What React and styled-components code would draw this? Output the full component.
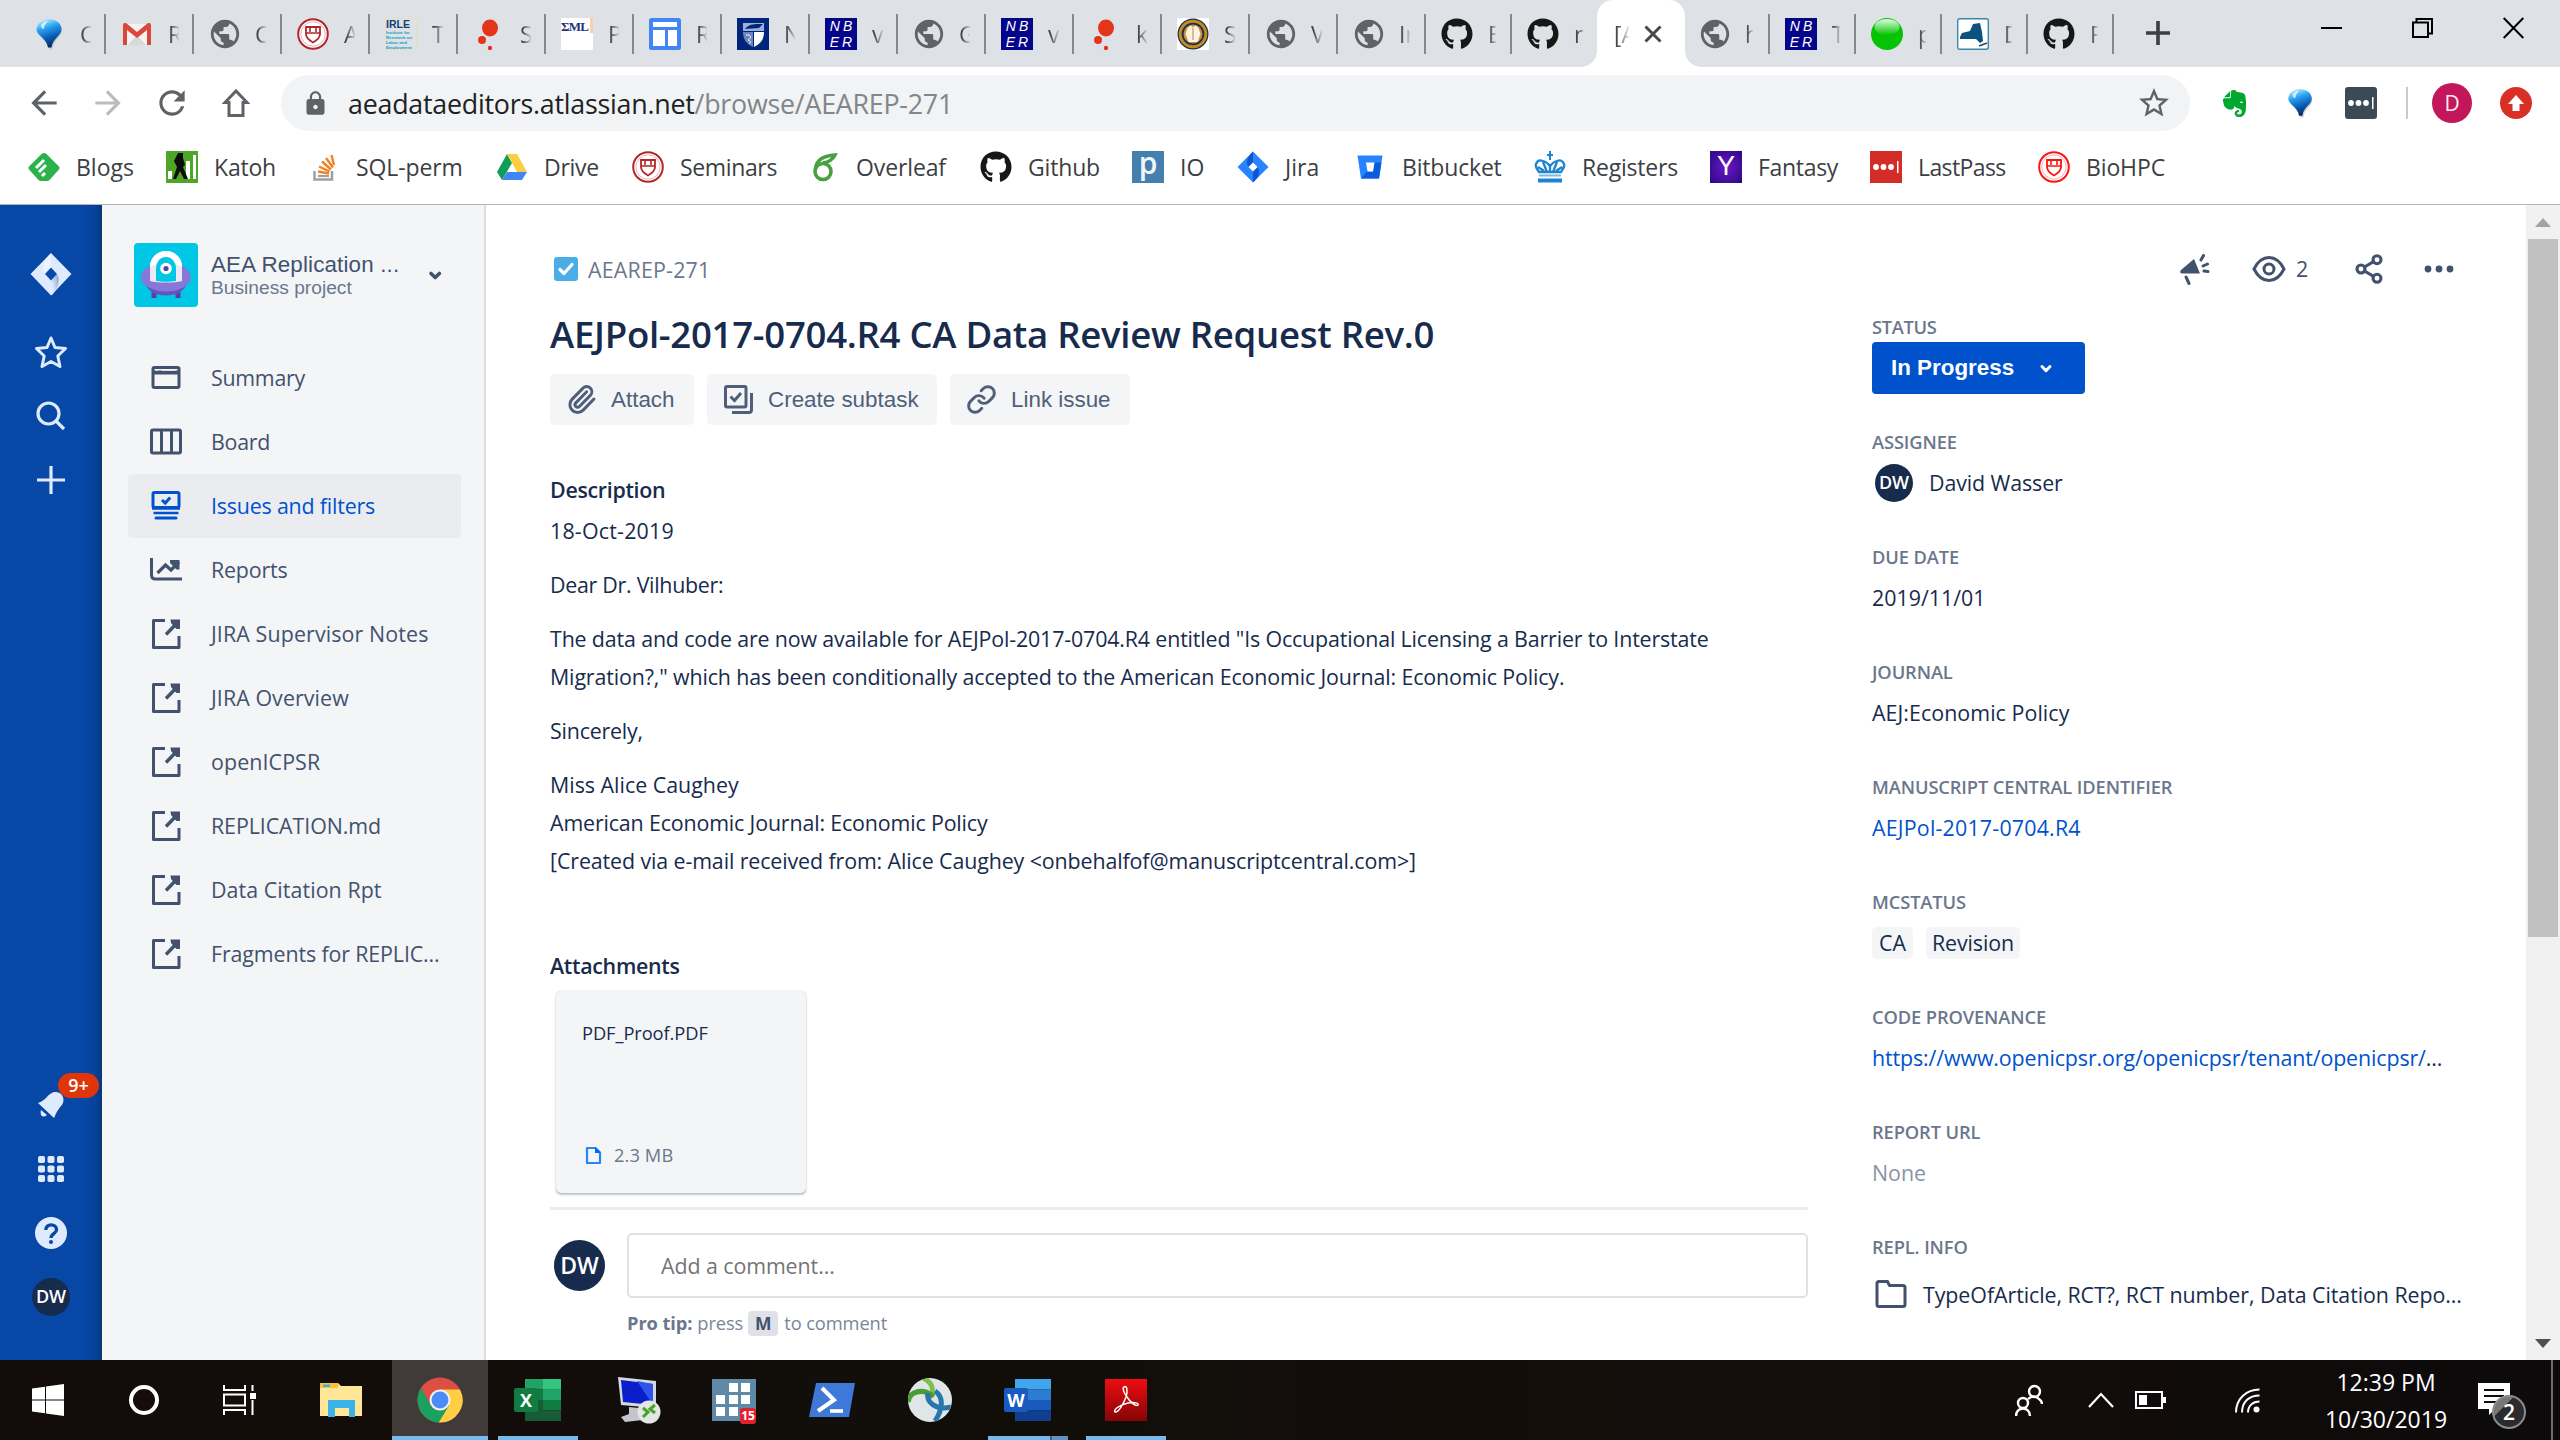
import React from "react";
import styled, { createGlobalStyle, css } from "styled-components";
import { MdPublic, MdArrowBack, MdArrowForward, MdRefresh, MdLock, MdStarBorder } from "react-icons/md";
import { FaGithub, FaEvernote } from "react-icons/fa";
import { Paperclip, Link, Share2 } from "lucide-react";

const ui = `"Open Sans", "Noto Sans", sans-serif`;
const arial = `"Liberation Sans", Arial, sans-serif`;
const navy = "#172b4d";
const slate = "#42526e";

const GlobalStyle = createGlobalStyle`
  * { box-sizing: border-box; }
  body { margin: 0; background: #fff; font-family: ${ui}; overflow: hidden; }
  svg { display: block; flex: none; }
`;

const Screen = styled.div`
  width: 2560px;
  height: 1440px;
  display: flex;
  flex-direction: column;
  overflow: hidden;
`;

/* ---------- icons ---------- */

const Pin = ({ size = 32 }) => (
  <svg width={size} height={size} viewBox="0 0 32 32">
    <defs>
      <linearGradient id="pinFill" x1="0.3" y1="0" x2="0.6" y2="1">
        <stop offset="0" stopColor="#bdeeff" />
        <stop offset="0.3" stopColor="#2ba4f3" />
        <stop offset="0.65" stopColor="#0a5cb4" />
        <stop offset="1" stopColor="#062456" />
      </linearGradient>
    </defs>
    <path d="M17 3a12 10 0 0 1 12 10c0 7-8 8-9.500 18q-1.500 1.500-3 0C14 22 6 19 5 13A12 10 0 0 1 17 3z" fill="#c9ced4" />
    <path d="M16 1a12.500 10.500 0 0 1 12.500 10.500c0 6-8.500 8.500-10 18h-3.500C13.500 20 3.500 17.500 3.500 11.500A12.500 10.500 0 0 1 16 1z" fill="url(#pinFill)" />
    <path d="M8 7q3-4 7-4-4 4-4 8-3 0-3-4z" fill="#fff" opacity="0.700" />
  </svg>
);

const Gmail = () => (
  <svg width="32" height="32" viewBox="0 0 32 32">
    <path d="M2 6h28v21H2z" fill="#f3f3f3" />
    <path d="M7 27 16 17l9 10z" fill="#d9d9d9" />
    <path d="M2 27V7q0-2 2-2h1l11 9L27 5h1q2 0 2 2v20h-4V12l-10 8L6 12v15z" fill="#d9483b" />
  </svg>
);

const Seal = ({ color = "#b3262b" }) => (
  <svg width="32" height="32" viewBox="0 0 32 32" fill="none" stroke={color}>
    <circle cx="16" cy="16" r="14.800" fill="#fff" strokeWidth="2" />
    <circle cx="16" cy="16" r="12.200" strokeWidth="0.700" opacity="0.500" />
    <path d="M9 9h14v7c0 4-3.500 6.500-7 8.500-3.500-2-7-4.500-7-8.500z" strokeWidth="1.800" />
    <path d="M9 15h14M13 9v5M19 9v5" strokeWidth="1.600" />
  </svg>
);

const IrleBox = styled.span`
  width: 32px;
  height: 32px;
  flex: none;
  display: flex;
  flex-direction: column;
  color: #0a9fc4;
  border: 1px solid #e6dfc8;
  font: 700 4.300px/5px ${arial};
  overflow: hidden;
  white-space: nowrap;
`;
const IrleTop = styled.span`
  color: #0e4270;
  font-size: 10.500px;
  line-height: 11px;
`;
const Irle = () => (
  <IrleBox>
    <IrleTop>IRLE</IrleTop>
    <span>Institute for</span>
    <span>Research on</span>
    <span>Labor and</span>
    <span>Employment</span>
  </IrleBox>
);

const Splat = () => (
  <svg width="32" height="32" viewBox="0 0 32 32" fill="#e2351a">
    <ellipse cx="17" cy="10" rx="8" ry="8.500" />
    <circle cx="9" cy="22" r="4" />
    <circle cx="17" cy="30" r="2.200" />
  </svg>
);

const EmlBox = styled.span`
  width: 32px;
  height: 32px;
  flex: none;
  background: linear-gradient(#f9cfa9, #f9cfa9) right top / 3px 15px no-repeat, #fff;
  color: #23307c;
  font: 700 13px/17px "Liberation Serif", serif;
  letter-spacing: -0.800px;
`;

const Sheet = () => (
  <svg width="32" height="32" viewBox="0 0 32 32">
    <rect width="32" height="32" rx="2.500" fill="#4285f4" />
    <path d="M4 4h24v5H4zM4 12h12v16H4zM19 12h9v16h-9z" fill="#fff" />
  </svg>
);

const Crest = () => (
  <svg width="32" height="32" viewBox="0 0 32 32">
    <rect width="32" height="32" fill="#01257c" />
    <path d="M6 5h21v8H6z" fill="#9fb0d8" />
    <path d="M8 11c5-6 11-5 18-5l-4 4z" fill="#01257c" />
    <path d="M6 14h10v15C10 26 6 22 6 14z" fill="#6d84bd" />
    <path d="M17 14h10c0 8-4 12-10 15z" fill="#fff" />
    <path d="M9 17c5-1 6 3 2 5 3 1 3 3 1 4" stroke="#fff" fill="none" />
  </svg>
);

const NberBox = styled.span`
  width: 32px;
  height: 32px;
  flex: none;
  background: #05058a;
  color: #fff;
  display: flex;
  flex-direction: column;
  align-items: center;
  font: italic 400 14px/16px ${arial};
  letter-spacing: 3px;
  padding-left: 3px;
`;
const Nber = () => (
  <NberBox>
    <span>NB</span>
    <span>ER</span>
  </NberBox>
);

const GoldSeal = () => (
  <svg width="32" height="32" viewBox="0 0 32 32">
    <rect width="32" height="32" fill="#fff" />
    <circle cx="16" cy="16" r="15.500" fill="#16314f" />
    <circle cx="16" cy="16" r="12.800" fill="none" stroke="#c98a1d" strokeWidth="3" />
    <circle cx="16" cy="16" r="9.500" fill="#c79143" />
    <path d="M10.500 10l3-2.500 2.500 2 2.500-2 3 2.500 2 6-3 8h-9l-3-8z" fill="#fff2df" />
    <path d="M16 10v12" stroke="#b88445" />
  </svg>
);

const Green = () => (
  <svg width="32" height="32" viewBox="0 0 32 32">
    <defs>
      <linearGradient id="gloss" x1="0" y1="0" x2="0" y2="1">
        <stop offset="0" stopColor="#e3fbe3" />
        <stop offset="1" stopColor="#05c405" />
      </linearGradient>
    </defs>
    <circle cx="16" cy="16" r="16" fill="#05c405" />
    <ellipse cx="16" cy="9" rx="12.500" ry="8" fill="url(#gloss)" />
  </svg>
);

const NewYork = () => (
  <svg width="32" height="32" viewBox="0 0 32 32">
    <rect x="0.700" y="0.700" width="30.600" height="30.600" rx="2" fill="#fff" stroke="#3e86a8" strokeWidth="1.400" />
    <path d="M3 19l2-4 8-2 3-7 7-1 2 9 1 9-3 2-4-4H3z" fill="#0b527f" />
    <path d="M22 28l8-3" stroke="#0b527f" strokeWidth="1.800" />
  </svg>
);

const Feedly = () => (
  <svg width="32" height="32" viewBox="0 0 32 32">
    <path d="M13.500 3q2.500-2 5 0l12 12q2 2 0 4l-9 10q-1 1-2.500 1h-6q-1.500 0-2.500-1l-9-10q-2-2 0-4z" fill="#2bb24c" />
    <path d="M8 17l8-8M11 21l7-7M14 25l3-3" stroke="#fff" strokeWidth="3" />
  </svg>
);

const Katoh = () => (
  <svg width="32" height="32" viewBox="0 0 32 32">
    <rect width="32" height="32" fill="#4fa528" />
    <path d="M2 20h4v8H2zM20 10h4v18h-4zM27 4h3v24h-3z" fill="#fff" />
    <path d="M12 2h5v5l2 7-2 2 5 12h-4l-4-8-4 8H7l4-12-3-6z" fill="#0c0c0c" />
  </svg>
);

const StackO = () => (
  <svg width="32" height="32" viewBox="0 0 32 32" fill="none">
    <path d="M6.500 20v8.500H24V20" stroke="#9aa0a6" strokeWidth="2.500" />
    <path d="M10 25h11" stroke="#9aa0a6" strokeWidth="2.200" />
    <path d="M10 20.500l11 2M11 15.500l10.500 5M14 10.500l9 8M18 7l7 9.500M23.500 4l2.500 10" stroke="#f48024" strokeWidth="2.400" />
  </svg>
);

const Drive = () => (
  <svg width="32" height="32" viewBox="0 0 32 32">
    <path d="M11 3 1 21l5 8 10-17z" fill="#0f9d58" />
    <path d="M11 3h10l10 18H21z" fill="#ffcd40" />
    <path d="M6 29l5-8h20l-5 8z" fill="#4285f4" />
  </svg>
);

const Overleaf = () => (
  <svg width="32" height="32" viewBox="0 0 32 32" fill="none" stroke="#47a141">
    <ellipse cx="15" cy="20.500" rx="8" ry="8" strokeWidth="3.600" />
    <path d="M7.500 18C8 10 13 5 27 4c-2 4-6 7-12 8" strokeWidth="3.400" />
  </svg>
);

const Pbox = styled.span`
  width: 32px;
  height: 32px;
  background: #457fae;
  color: #f1f6fa;
  font: 600 30px/24px ${ui};
  letter-spacing: 0;
  text-align: center;
`;

const JiraBlue = () => (
  <svg width="32" height="32" viewBox="0 0 32 32">
    <path d="M16 .5 31.500 16 16 31.500.5 16z" fill="#2684ff" />
    <path d="M16 .5v11L11.500 16C8 11 11 5 16 .5zM16 31.500v-11l4.500-4.500c3.500 5 .5 11-4.500 15.500z" fill="#0d57d0" />
    <path d="M16 11.500l4.500 4.500-4.500 4.500-4.500-4.500z" fill="#fff" />
  </svg>
);

const Bitbucket = () => (
  <svg width="32" height="32" viewBox="0 0 32 32">
    <path d="M3.500 4.500h25l-3.500 23H7z" fill="#2684ff" />
    <path d="M20 11.500h7.500L25 27.500H7l6-7h6z" fill="#0b5cdc" />
    <path d="M12 11.500h8.500l-1.500 9h-5.500z" fill="#fff" />
  </svg>
);

const Crown = () => (
  <svg width="32" height="32" viewBox="0 0 32 32" fill="none" stroke="#1d84cf">
    <path d="M16 0v9M13 4h6" strokeWidth="2" />
    <path d="M2 13q2-5 7-3 4 1 7 5 3-4 7-5 5-2 7 3 1 3-3 8H5q-4-5-3-8zM9 11l4 10M23 11l-4 10M16 14v7M4 16l6 4M28 16l-6 4" strokeWidth="2.300" />
    <path d="M5 24.500h22" strokeWidth="2" stroke="#7fb9e2" />
    <path d="M4 29.500h24" strokeWidth="4" />
  </svg>
);

const Ybox = styled.span`
  width: 32px;
  height: 32px;
  background: radial-gradient(circle, #6a18c9, #2c0780);
  color: #fff;
  font: 400 27px/31px ${arial};
  text-align: center;
`;

const Dots = ({ bg, r = 0 }) => (
  <svg width="32" height="32" viewBox="0 0 32 32">
    <rect width="32" height="32" rx={r} fill={bg} />
    <g fill="#fff">
      <circle cx="6" cy="16" r="2.900" />
      <circle cx="13.500" cy="16" r="2.900" />
      <circle cx="21" cy="16" r="2.900" />
      <path d="M27 10h1.500v12H27z" />
    </g>
  </svg>
);

/* ---------- tab strip ---------- */

const TabStrip = styled.div`
  height: 67px;
  flex: none;
  background: #dee1e6;
  display: flex;
  padding-left: 18px;
`;
const TabBox = styled.div`
  width: ${(p) => p.$w}px;
  flex: none;
  height: 67px;
  display: flex;
  align-items: center;
  gap: 15px;
  padding-left: 15px;
  background: linear-gradient(#85888c, #85888c) right 14px / 2px 40px no-repeat;
  svg { color: #5f6368; }
`;
const TabLabel = styled.span`
  width: ${(p) => p.$w || 11}px;
  overflow: hidden;
  white-space: nowrap;
  font-size: 23px;
  line-height: 32px;
  color: #45494d;
  mask-image: linear-gradient(90deg, #000 25%, transparent 110%);
`;
const ActiveTab = styled.div`
  width: 88px;
  height: 67px;
  flex: none;
  background: #fff;
  border-radius: 16px 16px 0 0;
  display: flex;
  align-items: center;
  gap: 15px;
  padding-left: 17px;
  margin: 0 -1px;
  position: relative;
  &::before, &::after {
    content: "";
    position: absolute;
    bottom: 0;
    width: 16px;
    height: 16px;
  }
  &::before { left: -16px; background: radial-gradient(circle at 0 0, transparent 15.500px, #fff 16px); }
  &::after { right: -16px; background: radial-gradient(circle at 100% 0, transparent 15.500px, #fff 16px); }
`;
const PlainTab = styled(TabBox)`
  background: none;
`;
const GlobeIcon = styled(MdPublic)`
  margin: 0 -2px 0 -1px;
`;
const NewTab = styled.div`
  padding: 21px 0 0 32px;
`;
const WindowButtons = styled.div`
  margin: 17px 36px 0 auto;
  display: flex;
  gap: 70px;
`;

const globe = <GlobeIcon size={34} />;
const octo = <FaGithub size={32} color="#181717" />;
const tabsLeft = [
  [<Pin />, "C"], [<Gmail />, "R"], [globe, "C"], [<Seal />, "A"], [<Irle />, "T"], [<Splat />, "S"],
  [<EmlBox>ΣML</EmlBox>, "P"], [<Sheet />, "R"], [<Crest />, "N"], [<Nber />, "v"], [globe, "G"],
  [<Nber />, "v"], [<Splat />, "k"], [<GoldSeal />, "S"], [globe, "V"], [globe, "In"],
];
const tabsRight = [[globe, "h"], [<Nber />, "T"], [<Green />, "p"], [<NewYork />, "D"], [octo, "F"]];

const Tabs = () => (
  <TabStrip>
    {tabsLeft.map(([icon, label], i) => (
      <TabBox key={i} $w={88}>{icon}<TabLabel>{label}</TabLabel></TabBox>
    ))}
    <TabBox $w={86}>{octo}<TabLabel $w={8}>E</TabLabel></TabBox>
    <PlainTab $w={86}>{octo}<TabLabel>r</TabLabel></PlainTab>
    <ActiveTab>
      <TabLabel $w={15}>[A</TabLabel>
      <svg width="18" height="18" viewBox="0 0 18 18" stroke="#45494d" strokeWidth="3"><path d="M1.500 1.500l15 15M16.500 1.500l-15 15" /></svg>
    </ActiveTab>
    {tabsRight.map(([icon, label], i) => (
      <TabBox key={i} $w={86}>{icon}<TabLabel $w={8}>{label}</TabLabel></TabBox>
    ))}
    <NewTab>
      <svg width="24" height="24" viewBox="0 0 24 24" stroke="#3c4043" strokeWidth="3.600"><path d="M12 0v24M0 12h24" /></svg>
    </NewTab>
    <WindowButtons>
      <svg width="21" height="22" viewBox="0 0 21 22"><path d="M0 10h21v2H0z" /></svg>
      <svg width="21" height="22" viewBox="0 0 21 22" fill="none" stroke="#000" strokeWidth="2"><path d="M1 5.500h15V20H1zM4.500 5.500V2H20v14.500h-4" /></svg>
      <svg width="21" height="22" viewBox="0 0 21 22" stroke="#000" strokeWidth="2"><path d="M.7 1l19.600 20M20.300 1 .7 21" /></svg>
    </WindowButtons>
  </TabStrip>
);

/* ---------- toolbar and bookmarks ---------- */

const Toolbar = styled.div`
  height: 72px;
  flex: none;
  display: flex;
  align-items: center;
  padding: 0 28px 0 25px;
`;
const NavButtons = styled.div`
  width: 256px;
  display: flex;
  align-items: center;
  gap: 26px;
  color: #5f6368;
`;
const HomeIcon = styled.svg`
  margin-left: 5px;
`;
const Omnibox = styled.div`
  width: 1909px;
  height: 56px;
  border-radius: 28px;
  background: #f1f3f4;
  display: flex;
  align-items: center;
  padding: 0 18px 0 21px;
  color: #5f6368;
`;
const Url = styled.span`
  margin: 0 auto 0 19px;
  font-size: 26.800px;
  letter-spacing: -0.230px;
  color: #80868b;
  b { font-weight: 400; color: #202124; }
`;
const Extensions = styled.div`
  margin-left: auto;
  display: flex;
  align-items: center;
`;
const Ext = styled.span`
  width: ${(p) => p.$w}px;
  display: flex;
`;
const Divider = styled.span`
  width: 2px;
  height: 32px;
  margin-right: 24px;
  background: #c8cacd;
`;
const Profile = styled.span`
  width: 40px;
  height: 40px;
  margin-right: 28px;
  border-radius: 50%;
  background: #c2185b;
  color: #fbe9f0;
  text-align: center;
  font: 400 21px/40px ${ui};
`;
const BookmarkBar = styled.div`
  height: 66px;
  flex: none;
  padding: 7px 0 0 28px;
  display: flex;
  align-items: flex-start;
  border-bottom: 1px solid #b4b5b7;
`;
const Bookmark = styled.div`
  width: ${(p) => p.$w}px;
  height: 42px;
  display: flex;
  align-items: center;
  gap: 16px;
  font-size: 23px;
  color: #3c4043;
  white-space: nowrap;
`;
const BookmarkName = styled.span`
  margin-top: -1px;
  letter-spacing: ${(p) => p.$ls}px;
`;

const bookmarks = [
  [<Feedly />, "Blogs", 138, 0],
  [<Katoh />, "Katoh", 142, -0.2],
  [<StackO />, "SQL-perm", 188, -0.1],
  [<Drive />, "Drive", 136, -0.26],
  [<Seal />, "Seminars", 176, -0.36],
  [<Overleaf />, "Overleaf", 172, -0.12],
  [octo, "Github", 152, -0.17],
  [<Pbox>p</Pbox>, "IO", 105, 0],
  [<JiraBlue />, "Jira", 117, 0],
  [<Bitbucket />, "Bitbucket", 180, -0.18],
  [<Crown />, "Registers", 176, -0.2],
  [<Ybox>Y</Ybox>, "Fantasy", 160, -0.32],
  [<Dots bg="#d32d27" />, "LastPass", 168, -0.6],
  [<Seal color="#fa1414" />, "BioHPC", 130, -0.13],
];

const Chrome = () => (
  <>
    <Tabs />
    <Toolbar>
      <NavButtons>
        <MdArrowBack size={38} />
        <MdArrowForward size={38} color="#babcbe" />
        <MdRefresh size={38} />
        <HomeIcon width="28" height="30" viewBox="0 0 28 30" fill="none" stroke="#5f6368" strokeWidth="3"><path d="M7 27.500V14.500H3L14 3l11 11.500h-4v13z" /></HomeIcon>
      </NavButtons>
      <Omnibox>
        <MdLock size={27} />
        <Url><b>aeadataeditors.atlassian.net</b>/browse/AEAREP-271</Url>
        <MdStarBorder size={36} />
      </Omnibox>
      <Extensions>
        <Ext $w={66}><FaEvernote size={31} color="#00a82d" /></Ext>
        <Ext $w={60}><Pin size={30} /></Ext>
        <Ext $w={61}><Dots bg="#3b4a54" r={3} /></Ext>
        <Divider />
        <Profile>D</Profile>
        <svg width="32" height="32" viewBox="0 0 32 32"><circle cx="16" cy="16" r="16" fill="#d93025" /><path d="M16 8l8 9h-4.500v7h-7v-7H8z" fill="#fff" /></svg>
      </Extensions>
    </Toolbar>
    <BookmarkBar>
      {bookmarks.map(([icon, label, w, ls]) => (
        <Bookmark key={label} $w={w}>{icon}<BookmarkName $ls={ls}>{label}</BookmarkName></Bookmark>
      ))}
    </BookmarkBar>
  </>
);

/* ---------- Jira rail and project navigation ---------- */

const Page = styled.div`
  height: 1155px;
  flex: none;
  display: flex;
`;
const Rail = styled.nav`
  width: 102px;
  flex: none;
  background: linear-gradient(90deg, rgba(9, 30, 66, 0) 84px, rgba(9, 30, 66, 0.12) 95px, rgba(9, 30, 66, 0.4) 102px), #0747a6;
  display: flex;
  flex-direction: column;
  align-items: center;
  padding: 37px 0 31px;
`;
const RailItem = styled.div`
  height: 64px;
  display: flex;
  align-items: center;
  justify-content: center;
  position: relative;
`;
const RailLogo = styled(RailItem)`
  margin-bottom: 14px;
`;
const RailSpacer = styled.div`
  flex: 1;
`;
const Badge = styled.span`
  position: absolute;
  left: 21px;
  top: 0;
  width: 41px;
  height: 25px;
  border-radius: 13px;
  background: #de350b;
  color: #fff;
  font: 600 18px/24px ${ui};
  text-align: center;
`;
const Avatar = styled.span`
  width: ${(p) => p.$d}px;
  height: ${(p) => p.$d}px;
  flex: none;
  border-radius: 50%;
  background: ${navy};
  color: #fff;
  text-align: center;
  font: 600 ${(p) => p.$f}px/${(p) => p.$d - 1}px ${ui};
`;

const ProjectNav = styled.aside`
  width: 384px;
  flex: none;
  background: #f4f5f7;
  border-right: 2px solid #dcdee3;
  padding: 38px 0 0 26px;
`;
const ProjectHead = styled.div`
  display: flex;
  align-items: center;
  height: 64px;
  padding-left: 6px;
  margin-bottom: 39px;
`;
const ProjectText = styled.div`
  width: 193px;
  margin: 2px 19px 0 13px;
  white-space: nowrap;
`;
const ProjectTitle = styled.div`
  font: 400 22.400px/24px ${arial};
  letter-spacing: 0.150px;
  color: ${slate};
`;
const ProjectSub = styled.div`
  font: 400 19.200px/22px ${arial};
  color: #6b778c;
`;
const NavItem = styled.div`
  width: 333px;
  height: 64px;
  border-radius: 4px;
  display: flex;
  align-items: center;
  gap: 27px;
  padding-left: 20px;
  white-space: nowrap;
  color: ${slate};
  ${(p) => p.$on && css`
    background: #ebecf0;
    color: #0052cc;
  `}
`;
const NavLabel = styled.span`
  margin-top: -2px;
  font-size: 21.400px;
  letter-spacing: ${(p) => p.$ls}px;
`;

const NavSvg = ({ children }) => (
  <svg width="36" height="36" viewBox="0 0 36 36" fill="none" stroke="currentColor" strokeWidth="3">{children}</svg>
);
const ext = (
  <NavSvg>
    <path d="M17 4.500H5.500V31.500H31V20" strokeLinejoin="round" />
    <path d="M18 18.500 30 6" strokeWidth="3.400" />
    <path d="M22.500 3.500H32V13h-3.500L23 7z" fill="currentColor" stroke="none" />
  </NavSvg>
);
const navItems = [
  [<NavSvg><rect x="5" y="7.500" width="26" height="20" rx="1.500" /><path d="M5 12.500h26" strokeWidth="4" /><path d="M8 9.800h2M13.500 9.800h14" stroke="#f4f5f7" strokeWidth="1.800" /></NavSvg>, "Summary", -0.26],
  [<NavSvg><rect x="3.500" y="6" width="29" height="23" rx="1.500" /><path d="M13.500 6v23M23.500 6v23" /></NavSvg>, "Board", -0.28],
  [<NavSvg><rect x="5" y="4.500" width="26" height="15" rx="1.500" /><path d="M14 12l3.200 3 5-5.500" /><path d="M4 20.500h28M5.500 25h25" strokeWidth="2.500" /><path d="M8 30h20" strokeWidth="3" strokeLinecap="round" /></NavSvg>, "Issues and filters", -0.19],
  [<NavSvg><path d="M3.500 6v17q0 4 4 4H34" /><path d="M9.500 21l8-8 5.500 5 8-8" strokeWidth="3.200" /><path d="M22 8h9.500v9.500h-3L22 11z" fill="currentColor" stroke="none" /></NavSvg>, "Reports", -0.18],
  [ext, "JIRA Supervisor Notes", 0.12],
  [ext, "JIRA Overview", 0.08],
  [ext, "openICPSR", 0.1],
  [ext, "REPLICATION.md", -0.08],
  [ext, "Data Citation Rpt", 0.07],
  [ext, "Fragments for REPLIC...", -0.12],
];

const Side = () => (
  <>
    <Rail>
      <RailLogo>
        <svg width="42" height="44" viewBox="0 0 42 44">
          <defs>
            <linearGradient id="jl" x1="1" y1="0" x2="0" y2="0.600"><stop offset="0.100" stopColor="#8fabd6" /><stop offset="0.900" stopColor="#deebff" /></linearGradient>
          </defs>
          <path d="M21 1 41.500 22 21 43.500.5 22z" fill="#deebff" />
          <path d="M21 1v15l-6 6C10 15 15 7 21 1z" fill="#fff" opacity="0.400" />
          <path d="M21 28.500l6-6.500c4 5 1 15-5 21l-1-.5z" fill="url(#jl)" />
          <path d="M21 15.500l6 6.500-6 6.500-6-6.500z" fill="#0747a6" />
        </svg>
      </RailLogo>
      <RailItem>
        <svg width="34" height="34" viewBox="0 0 34 34" fill="none" stroke="#deebff" strokeWidth="3" strokeLinejoin="round"><path d="M17 3l4 9.500 10.500 1L23.800 21l2.200 10.500-9-5-9 5L10.200 21 2.500 13.500l10.500-1z" /></svg>
      </RailItem>
      <RailItem>
        <svg width="30" height="30" viewBox="0 0 30 30" fill="none" stroke="#deebff" strokeWidth="3.200"><circle cx="12.500" cy="12.500" r="10.500" /><path d="M19.500 19.500l8.500 8.500" /></svg>
      </RailItem>
      <RailItem>
        <svg width="28" height="28" viewBox="0 0 28 28" stroke="#deebff" strokeWidth="3.200"><path d="M14 0v28M0 14h28" /></svg>
      </RailItem>
      <RailSpacer />
      <RailItem>
        <svg width="28" height="28" viewBox="0 0 28 28" fill="#deebff" ><path d="M1 12c9-3 9-9 16-11 7-1 11 5 9 11-2 4-5 5-9 15z" /><path d="M4 19l6 5q-4 3-6 0-1-3 0-5z" /></svg>
        <Badge>9+</Badge>
      </RailItem>
      <RailItem>
        <svg width="26" height="26" viewBox="0 0 26 26" fill="#deebff">
          {[0, 9.5, 19].map((y) => [0, 9.5, 19].map((x) => <rect key={`${x}-${y}`} x={x} y={y} width="7" height="7" rx="1.800" />))}
        </svg>
      </RailItem>
      <RailItem>
        <svg width="32" height="32" viewBox="0 0 32 32"><circle cx="16" cy="16" r="16" fill="#deebff" /><path d="M10.800 13c0-7 10.700-6.500 10.700-.3 0 4-5.500 3.800-5.500 8.300" fill="none" stroke="#0747a6" strokeWidth="3.300" /><circle cx="16" cy="25" r="2" fill="#0747a6" /></svg>
      </RailItem>
      <RailItem><Avatar $d={38} $f={18}>DW</Avatar></RailItem>
    </Rail>
    <ProjectNav>
      <ProjectHead>
        <svg width="64" height="64" viewBox="0 0 64 64">
          <rect width="64" height="64" rx="4" fill="#00c7e5" />
          <path d="M17.500 49h5v6h-5zM41.500 49h5v6h-5z" fill="#5243aa" />
          <path d="M12 42h40c-3 7-10 10.500-20 10.500S15 49 12 42z" fill="#6554c0" />
          <ellipse cx="32" cy="34" rx="25" ry="14.500" fill="#8777d9" />
          <path d="M16 38V23a16 15 0 0 1 32 0v15c-8 2-24 2-32 0z" fill="#ece9f8" />
          <path d="M16 24a16 16 0 0 1 32 0l-4-2H20z" fill="#fff" />
          <path d="M22 38V25a10 11 0 0 1 20 0v13c-5 1-15 1-20 0z" fill="#00c7e5" />
          <circle cx="32" cy="25.500" r="5.800" fill="#fff" />
          <circle cx="32" cy="25.500" r="2.600" fill="#5243aa" />
        </svg>
        <ProjectText>
          <ProjectTitle>AEA Replication ...</ProjectTitle>
          <ProjectSub>Business project</ProjectSub>
        </ProjectText>
        <svg width="24" height="20" viewBox="0 0 24 20" fill="none" stroke={slate} strokeWidth="3.600" strokeLinecap="round" strokeLinejoin="round"><path d="M8 8.500l4.200 4 4.200-4" /></svg>
      </ProjectHead>
      {navItems.map(([icon, label, ls]) => (
        <NavItem key={label} $on={label === "Issues and filters"}>{icon}<NavLabel $ls={ls}>{label}</NavLabel></NavItem>
      ))}
    </ProjectNav>
  </>
);

/* ---------- issue ---------- */

const Main = styled.main`
  width: 1322px;
  flex: none;
  padding: 44px 0 0 64px;
`;
const Crumb = styled.div`
  height: 40px;
  display: flex;
  align-items: center;
  gap: 10px;
  padding-left: 4px;
  font-size: 21.400px;
  letter-spacing: 0.200px;
  color: #6b778c;
`;
const Title = styled.h1`
  margin: 20px 0 15px;
  font-size: 36.600px;
  font-weight: 600;
  line-height: 50px;
  letter-spacing: -0.290px;
  white-space: nowrap;
  color: ${navy};
`;
const Actions = styled.div`
  display: flex;
  gap: 13px;
  margin-bottom: 46px;
`;
const ActionButton = styled.div`
  width: ${(p) => p.$w}px;
  height: 51px;
  border-radius: 5px;
  background: #f4f5f7;
  color: #505f79;
  display: flex;
  align-items: center;
  gap: 14px;
  padding-left: 16px;
  font: 400 22.400px/26px ${arial};
  white-space: nowrap;
`;
const SectionTitle = styled.h2`
  margin: 0;
  font-size: 21.400px;
  font-weight: 600;
  line-height: 38px;
  letter-spacing: -0.300px;
  color: ${navy};
`;
const Para = styled.p`
  margin: 0 0 ${(p) => (p.$tight ? 0 : 16)}px;
  font-size: 21.400px;
  line-height: 38px;
  letter-spacing: ${(p) => p.$ls || 0}px;
  white-space: nowrap;
  color: ${navy};
`;
const Description = styled.section`
  height: 476px;
  ${SectionTitle} { margin-bottom: 3px; }
`;
const FileCard = styled.div`
  width: 250px;
  height: 202px;
  margin: 6px 0 14px 6px;
  border-radius: 5px;
  background: #f4f5f7;
  box-shadow: 0 2px 2px rgba(9, 30, 66, 0.25), 0 0 1px rgba(9, 30, 66, 0.31);
  display: flex;
  flex-direction: column;
  justify-content: space-between;
  padding: 28px 26px 24px;
  font-size: 18.300px;
  line-height: 28px;
  letter-spacing: -0.080px;
  color: ${navy};
`;
const FileSize = styled.div`
  display: flex;
  align-items: center;
  gap: 12px;
  padding-left: 3px;
  letter-spacing: 0.100px;
  color: #6b778c;
`;
const CommentBox = styled.div`
  width: 1258px;
  border-top: 3px solid #ebecf0;
  padding-top: 23px;
  display: flex;
`;
const CommentLeft = styled.div`
  width: 77px;
  padding: 7px 0 0 4px;
  display: flex;
`;
const CommentInput = styled.div`
  width: 1181px;
  height: 65px;
  border: 2px solid #dfe1e6;
  border-radius: 5px;
  padding-left: 32px;
  font-size: 21.400px;
  line-height: 62px;
  letter-spacing: -0.080px;
  color: #757575;
`;
const ProTip = styled.div`
  margin-top: 12px;
  display: flex;
  align-items: center;
  font-size: 18.300px;
  line-height: 26px;
  letter-spacing: -0.100px;
  color: #7a869a;
  b { color: #6b778c; margin-right: 5px; }
`;
const Key = styled.kbd`
  width: 30px;
  height: 25px;
  margin: 0 6px 0 5px;
  border-radius: 4px;
  background: #dfe1e6;
  color: ${slate};
  font: 700 17.500px/25px ${ui};
  text-align: center;
`;

const Issue = () => (
  <Main>
    <Crumb>
      <svg width="24" height="24" viewBox="0 0 24 24"><rect width="24" height="24" rx="3" fill="#4bade8" /><path d="M6 12.500l4 4L18 7.500" fill="none" stroke="#fff" strokeWidth="3.200" strokeLinecap="round" strokeLinejoin="round" /></svg>
      AEAREP-271
    </Crumb>
    <Title>AEJPol-2017-0704.R4 CA Data Review Request Rev.0</Title>
    <Actions>
      <ActionButton $w={144}><Paperclip size={31} strokeWidth={2.300} />Attach</ActionButton>
      <ActionButton $w={230}>
        <svg width="31" height="31" viewBox="0 0 31 31" fill="none" stroke="currentColor" strokeWidth="3"><rect x="2.500" y="2.500" width="20.500" height="20.500" rx="1.500" /><path d="M7.500 12.500l4 4 6.500-7.500M28.500 9v17q0 2.500-2.500 2.500H9" /></svg>
        Create subtask
      </ActionButton>
      <ActionButton $w={180}><Link size={31} strokeWidth={2.300} />Link issue</ActionButton>
    </Actions>
    <Description>
      <SectionTitle>Description</SectionTitle>
      <Para $ls={0.2}>18-Oct-2019</Para>
      <Para $ls={-0.28}>Dear Dr. Vilhuber:</Para>
      <Para $tight $ls={-0.15}>The data and code are now available for AEJPol-2017-0704.R4 entitled "Is Occupational Licensing a Barrier to Interstate</Para>
      <Para $ls={-0.13}>Migration?," which has been conditionally accepted to the American Economic Journal: Economic Policy.</Para>
      <Para $ls={-0.2}>Sincerely,</Para>
      <Para $tight>Miss Alice Caughey</Para>
      <Para $tight $ls={-0.15}>American Economic Journal: Economic Policy</Para>
      <Para $tight $ls={-0.11}>[Created via e-mail received from: Alice Caughey &lt;onbehalfof@manuscriptcentral.com&gt;]</Para>
    </Description>
    <SectionTitle>Attachments</SectionTitle>
    <FileCard>
      <span>PDF_Proof.PDF</span>
      <FileSize>
        <svg width="17" height="19" viewBox="0 0 17 19" fill="none" stroke="#2684ff" strokeWidth="2.200" strokeLinejoin="round"><path d="M2 2h8.500L15 6.500V17H2z" /><path d="M10 1v6h6z" fill="#0065ff" stroke="none" /></svg>
        2.3 MB
      </FileSize>
    </FileCard>
    <CommentBox>
      <CommentLeft><Avatar $d={51} $f={23}>DW</Avatar></CommentLeft>
      <div>
        <CommentInput>Add a comment...</CommentInput>
        <ProTip><b>Pro tip:</b>press<Key>M</Key>to comment</ProTip>
      </div>
    </CommentBox>
  </Main>
);

const DetailsPanel = styled.aside`
  width: 718px;
  flex: none;
  padding: 44px 0 0 64px;
`;
const IssueTools = styled.div`
  height: 40px;
  margin-bottom: 19px;
  padding: 0 72px 0 307px;
  display: flex;
  align-items: center;
  color: ${slate};
`;
const Watch = styled.div`
  display: flex;
  align-items: center;
  gap: 10px;
  margin: 0 45px 0 42px;
  font-size: 21.400px;
  line-height: 28px;
`;
const More = styled.div`
  margin-left: auto;
`;
const Field = styled.div`
  height: 115px;
`;
const Label = styled.div`
  height: 38px;
  font-size: 18.300px;
  font-weight: 600;
  line-height: 37px;
  letter-spacing: ${(p) => p.$ls || -0.11}px;
  color: #6b778c;
`;
const Value = styled.div`
  height: ${(p) => p.$h || 43}px;
  display: flex;
  align-items: center;
  font-size: 21.400px;
  letter-spacing: ${(p) => p.$ls || 0}px;
  white-space: nowrap;
  color: ${(p) => (p.$muted ? "#8993a4" : navy)};
`;
const Anchor = styled.a`
  color: #0052cc;
`;
const StatusButton = styled.div`
  width: 213px;
  height: 52px;
  margin-top: -4px;
  border-radius: 4px;
  background: #0052cc;
  color: #fff;
  display: flex;
  align-items: center;
  gap: 20px;
  padding-left: 19px;
  font: 700 22.400px/26px ${arial};
`;
const Tag = styled.span`
  width: ${(p) => p.$w}px;
  height: 32px;
  margin-right: 13px;
  border-radius: 5px;
  background: #f4f5f7;
  line-height: 31px;
  text-align: center;
`;
const Person = styled.span`
  margin-left: 16px;
`;
const ValueIcon = styled.span`
  display: flex;
  margin: 0 ${(p) => p.$gap || 0}px 0 3px;
`;

const Details = () => (
  <DetailsPanel>
    <IssueTools>
      <svg width="31" height="31" viewBox="0 0 31 31" fill="none" stroke={slate} strokeWidth="3" strokeLinecap="round"><path d="M15 5l6 14.500H3q-3-.5-1-3.500z" fill={slate} stroke="none" /><path d="M7 23l3 6.500M22 6l2.500-4.500M24 12l4.500-2M25 17l4 .5" /></svg>
      <Watch>
        <svg width="34" height="28" viewBox="0 0 34 28" fill="none" stroke={slate} strokeWidth="3"><path d="M2 14C6 6 11 2.500 17 2.500S28 6 32 14c-4 8-9 11.500-15 11.500S6 22 2 14z" /><circle cx="17" cy="14" r="5" /></svg>
        2
      </Watch>
      <Share2 size={32} strokeWidth={2.300} />
      <More>
        <svg width="30" height="8" viewBox="0 0 30 8" fill={slate}><circle cx="4" cy="4" r="3.400" /><circle cx="15" cy="4" r="3.400" /><circle cx="26" cy="4" r="3.400" /></svg>
      </More>
    </IssueTools>
    <Field>
      <Label $ls={-0.3}>STATUS</Label>
      <StatusButton>
        In Progress
        <svg width="24" height="20" viewBox="0 0 24 20" fill="none" stroke="#fff" strokeWidth="3" strokeLinecap="round" strokeLinejoin="round"><path d="M8 8.500l4 4.200 4-4.200" /></svg>
      </StatusButton>
    </Field>
    <Field><Label>ASSIGNEE</Label><Value $ls={-0.1}><ValueIcon><Avatar $d={38} $f={18}>DW</Avatar></ValueIcon><Person>David Wasser</Person></Value></Field>
    <Field><Label>DUE DATE</Label><Value>2019/11/01</Value></Field>
    <Field><Label>JOURNAL</Label><Value $ls={0.06}>AEJ:Economic Policy</Value></Field>
    <Field><Label>MANUSCRIPT CENTRAL IDENTIFIER</Label><Value $ls={0.2}><Anchor>AEJPol-2017-0704.R4</Anchor></Value></Field>
    <Field><Label>MCSTATUS</Label><Value $ls={-0.1}><Tag $w={41}>CA</Tag><Tag $w={94}>Revision</Tag></Value></Field>
    <Field><Label>CODE PROVENANCE</Label><Value $ls={-0.12}><Anchor>https://www.openicpsr.org/openicpsr/tenant/openicpsr/</Anchor>...</Value></Field>
    <Field><Label>REPORT URL</Label><Value $muted>None</Value></Field>
    <Field>
      <Label>REPL. INFO</Label>
      <Value $ls={-0.07} $h={56}>
        <ValueIcon $gap={16}><svg width="32" height="29" viewBox="0 0 32 29" fill="none" stroke={slate} strokeWidth="3" strokeLinejoin="round"><path d="M2 3.500q0-2 2-2h8.500l2 4H28q2 0 2 2v17q0 2-2 2H4q-2 0-2-2z" /></svg></ValueIcon>
        TypeOfArticle, RCT?, RCT number, Data Citation Repo...
      </Value>
    </Field>
  </DetailsPanel>
);

const Scrollbar = styled.div`
  width: 34px;
  flex: none;
  background: #f1f1f1;
  display: flex;
  flex-direction: column;
  align-items: center;
  padding: 13px 0 12px;
`;
const Thumb = styled.div`
  width: 30px;
  height: 698px;
  margin: 12px 0 auto;
  background: #c1c1c1;
`;

/* ---------- taskbar ---------- */

const Taskbar = styled.div`
  height: 80px;
  flex: none;
  background: linear-gradient(90deg, #140c0a, #110e0a 40%, #150d0b 70%, #0c0a0b);
  display: flex;
  color: #fff;
`;
const Task = styled.div`
  width: ${(p) => p.$w || 98}px;
  height: 80px;
  flex: none;
  display: flex;
  align-items: center;
  justify-content: center;
  background: ${(p) => (p.$active ? "#403b39" : "transparent")};
  ${(p) => p.$bar && css`
    background-image: ${p.$bar === "split"
      ? "linear-gradient(90deg, #76b9ed 62px, #3f5f7a 62px, #3f5f7a 64px, #5f93bd 64px)"
      : "linear-gradient(#76b9ed, #76b9ed)"};
    background-size: ${p.$active ? "100%" : "80px"} 4px;
    background-position: center bottom;
    background-repeat: no-repeat;
  `}
`;
const CalendarBox = styled.div`
  width: 44px;
  height: 44px;
  position: relative;
`;
const CalendarDay = styled.span`
  position: absolute;
  right: 0;
  bottom: -2px;
  width: 16px;
  height: 16px;
  border-radius: 3px;
  background: #e3212b;
  font: 700 12px/16px ${ui};
  text-align: center;
`;
const OfficeLetter = styled.span`
  position: absolute;
  left: 0;
  top: 10px;
  width: 24px;
  height: 24px;
  border-radius: 2px;
  background: ${(p) => p.$bg};
  font: 700 18px/24px ${ui};
  text-align: center;
`;
const OfficeBox = styled.div`
  width: 48px;
  height: 44px;
  padding-left: 11px;
  position: relative;
`;
const Office = ({ letter, bg, colors }) => (
  <OfficeBox>
    <svg width="36" height="44" viewBox="0 0 36 44">
      {colors.map((c, i) => <rect key={i} y={1 + i * 10.5} width="36" height="10.500" fill={c} />)}
      {letter === "X" && (
        <>
          <path d="M18 1h18v10.500H18z" fill="#33c481" />
          <path d="M18 11.500h18V22H18z" fill="#21a366" />
          <path d="M0 22h18v10.500H0z" fill="#185c37" />
        </>
      )}
    </svg>
    <OfficeLetter $bg={bg}>{letter}</OfficeLetter>
  </OfficeBox>
);

const Tray = styled.div`
  flex: 1;
  display: flex;
  justify-content: flex-end;
  align-items: center;
`;
const TrayIcon = styled.div`
  margin-right: ${(p) => p.$gap}px;
`;
const Clock = styled.div`
  width: 124px;
  margin-right: 30px;
  font-size: 23px;
  line-height: 37px;
  text-align: center;
  white-space: nowrap;
  padding-top: 2px;
`;
const Notice = styled.div`
  width: 48px;
  height: 44px;
  margin: 10px 25px 0 0;
  position: relative;
`;
const NoticeCount = styled.span`
  position: absolute;
  left: 14px;
  top: 12px;
  width: 34px;
  height: 34px;
  border: 2px solid #8b8b8b;
  border-radius: 50%;
  background: linear-gradient(135deg, #777 32%, #2b2b2d 33%);
  font: 600 21px/30px ${ui};
  text-align: center;
`;
const Edge = styled.div`
  width: 2px;
  height: 80px;
  margin-right: 7px;
  background: #6d6b6b;
`;

const Bar = () => (
  <Taskbar>
    <Task $w={96}>
      <svg width="32" height="32" viewBox="0 0 32 32" fill="#fff"><path d="M0 4.500 13 2.700V15.500H0zM14 2.500 32 0v15.500H14zM0 16.500h13v12.800L0 27.500zM14 16.500h18V32l-18-2.500z" /></svg>
    </Task>
    <Task $w={95}>
      <svg width="32" height="32" viewBox="0 0 32 32" fill="none" stroke="#fff" strokeWidth="4"><circle cx="16" cy="16" r="13" /></svg>
    </Task>
    <Task $w={98}>
      <svg width="34" height="30" viewBox="0 0 34 30" fill="none" stroke="#fff" strokeWidth="2"><path d="M1 0v5h21V0M1 30v-5h21v5M1 9.500h21v11H1zM29.500 0v6M29.500 15v15" /><rect x="27" y="8" width="6" height="6" fill="#fff" stroke="none" /></svg>
    </Task>
    <Task $w={103}>
      <svg width="42" height="36" viewBox="0 0 42 36"><path d="M0 1h18l3 3h21v30H0z" fill="#ffe797" /><path d="M0 1h18v5H0z" fill="#f8c33c" /><path d="M3 2.500h7v2.500H3z" fill="#3bb0e8" /><path d="M8 18h27v17h-6v-9H15v9H8z" fill="#3bb3e9" /></svg>
    </Task>
    <Task $w={96} $active $bar="full">
      <svg width="46" height="46" viewBox="0 0 48 48">
        <circle cx="24" cy="24" r="23.500" fill="#dd4f43" />
        <path d="M24 13h20.800A23.500 23.500 0 0 1 22.500 47.500L33.500 29.500z" fill="#ffce44" />
        <path d="M4.200 11.500 14.500 29.500q4 6 11 5.400l-3 12.600A23.500 23.500 0 0 1 4.200 11.500z" fill="#1aa15f" />
        <path d="M33.500 29.500 22.500 47.500l-1-11z" fill="#1aa15f" />
        <circle cx="24" cy="24" r="11" fill="#f1f1f1" />
        <circle cx="24" cy="24" r="8.800" fill="#4c8bf5" />
      </svg>
    </Task>
    <Task $w={100} $bar="full"><Office letter="X" bg="#107c41" colors={["#21a366", "#107c41", "#107c41", "#185c37"]} /></Task>
    <Task $w={97}>
      <svg width="48" height="48" viewBox="0 0 48 48">
        <path d="M5 1l38 4v27L8 29z" fill="#d5d8de" /><path d="M8 4l32 4v21L10 26z" fill="#0a1fc9" /><path d="M24 5l16 3v21z" fill="#2f55e8" />
        <path d="M16 31l10 1v7l4 5-18 2-4-5 8-3z" fill="#c3c6cc" />
        <circle cx="36" cy="36" r="11.500" fill="#e4e6e4" /><path d="M30 32l5 4-5 5M42 29l-5 4 5 4" fill="none" stroke="#45a52b" strokeWidth="3" />
      </svg>
    </Task>
    <Task>
      <CalendarBox>
        <svg width="44" height="44" viewBox="0 0 44 44"><rect y="1" width="44" height="42" fill="#6089a8" /><g fill="#fff"><path d="M17 5h9v9h-9zM29 5h9v9h-9zM4 17h9v9H4zM17 17h9v9h-9zM29 17h9v9h-9zM4 29h9v9H4zM17 29h9v9h-9z" /></g></svg>
        <CalendarDay>15</CalendarDay>
      </CalendarBox>
    </Task>
    <Task>
      <svg width="46" height="36" viewBox="0 0 46 36"><path d="M7 1h39l-6 34H0z" fill="#3e78d8" /><path d="M13 6l12 12L9 29" fill="none" stroke="#fff" strokeWidth="4" /><path d="M21 29h13" stroke="#fff" strokeWidth="3.600" /></svg>
    </Task>
    <Task>
      <svg width="46" height="46" viewBox="0 0 46 46" fill="none"><defs><clipPath id="orb"><circle cx="23" cy="23" r="22" /></clipPath></defs><circle cx="23" cy="23" r="22" fill="#dfe6e8" /><g clipPath="url(#orb)"><path d="M14 0c12 5 13 12 10 20" stroke="#7cbf4a" strokeWidth="5" /><path d="M1 25c1-12 18-14 25-5" stroke="#4c9c34" strokeWidth="5.500" /><path d="M21 16c-2 9 8 18 23 14M28 14c9 6 8 18 0 30" stroke="#2776ac" strokeWidth="5" /></g></svg>
    </Task>
    <Task $bar="split"><Office letter="W" bg="#185abd" colors={["#41a5ee", "#2b7cd3", "#185abd", "#103f91"]} /></Task>
    <Task $bar="full">
      <svg width="42" height="42" viewBox="0 0 42 42"><defs><linearGradient id="pdf" x1="0" y1="0" x2="0" y2="1"><stop offset="0" stopColor="#ee0d10" /><stop offset="1" stopColor="#850507" /></linearGradient></defs><rect width="42" height="42" fill="url(#pdf)" /><path d="M19 8c3-2 4 4 2 10-3 8-8 16-11 15-2-2 4-7 13-9 7-1 11 0 10 2-2 2-8-3-11-8-3-4-5-9-3-10z" fill="none" stroke="#fff" strokeWidth="1.500" /></svg>
    </Task>
    <Tray>
      <TrayIcon $gap={45}>
        <svg width="28" height="32" viewBox="0 0 28 32" fill="none" stroke="#fff" strokeWidth="2.400"><circle cx="19.500" cy="7.500" r="5.500" /><path d="M13 15q6-5 11 0 3 2 3 5" /><circle cx="8" cy="19" r="5" /><path d="M1 32c0-10 14-10 14 0" /></svg>
      </TrayIcon>
      <TrayIcon $gap={21}>
        <svg width="26" height="16" viewBox="0 0 26 16" fill="none" stroke="#fff" strokeWidth="2.200"><path d="M1 15 13 2l12 13" /></svg>
      </TrayIcon>
      <TrayIcon $gap={69}>
        <svg width="31" height="18" viewBox="0 0 31 18"><path d="M1 1h26v16H1z" fill="none" stroke="#fff" strokeWidth="2" /><path d="M4 4h8v10H4zM28 6h3v6h-3z" fill="#fff" /></svg>
      </TrayIcon>
      <TrayIcon $gap={64}>
        <svg width="25" height="25" viewBox="0 0 25 25" fill="none" stroke="#fff" strokeWidth="2"><path d="M1 24.500C1 11 11 1.500 24.500 1.500M7 24.500C7 14 14 7.500 24.500 7.500M13 24.500c0-7 5-11 11.500-11" /><circle cx="21.500" cy="21.500" r="3" fill="#fff" stroke="none" /></svg>
      </TrayIcon>
      <Clock>12:39 PM<br />10/30/2019</Clock>
      <Notice>
        <svg width="32" height="36" viewBox="0 0 32 36"><path d="M0 0h32v26H17l-6 6v-6H0z" fill="#fff" /><path d="M6 7h20M6 13h20M6 19h14" stroke="#120c0b" strokeWidth="2" /></svg>
        <NoticeCount>2</NoticeCount>
      </Notice>
      <Edge />
    </Tray>
  </Taskbar>
);

export default function App() {
  return (
    <Screen>
      <GlobalStyle />
      <Chrome />
      <Page>
        <Side />
        <Issue />
        <Details />
        <Scrollbar>
          <svg width="16" height="9" viewBox="0 0 16 9"><path d="M0 9 8 0l8 9z" fill="#a3a3a3" /></svg>
          <Thumb />
          <svg width="16" height="9" viewBox="0 0 16 9"><path d="M0 0h16L8 9z" fill="#505050" /></svg>
        </Scrollbar>
      </Page>
      <Bar />
    </Screen>
  );
}
